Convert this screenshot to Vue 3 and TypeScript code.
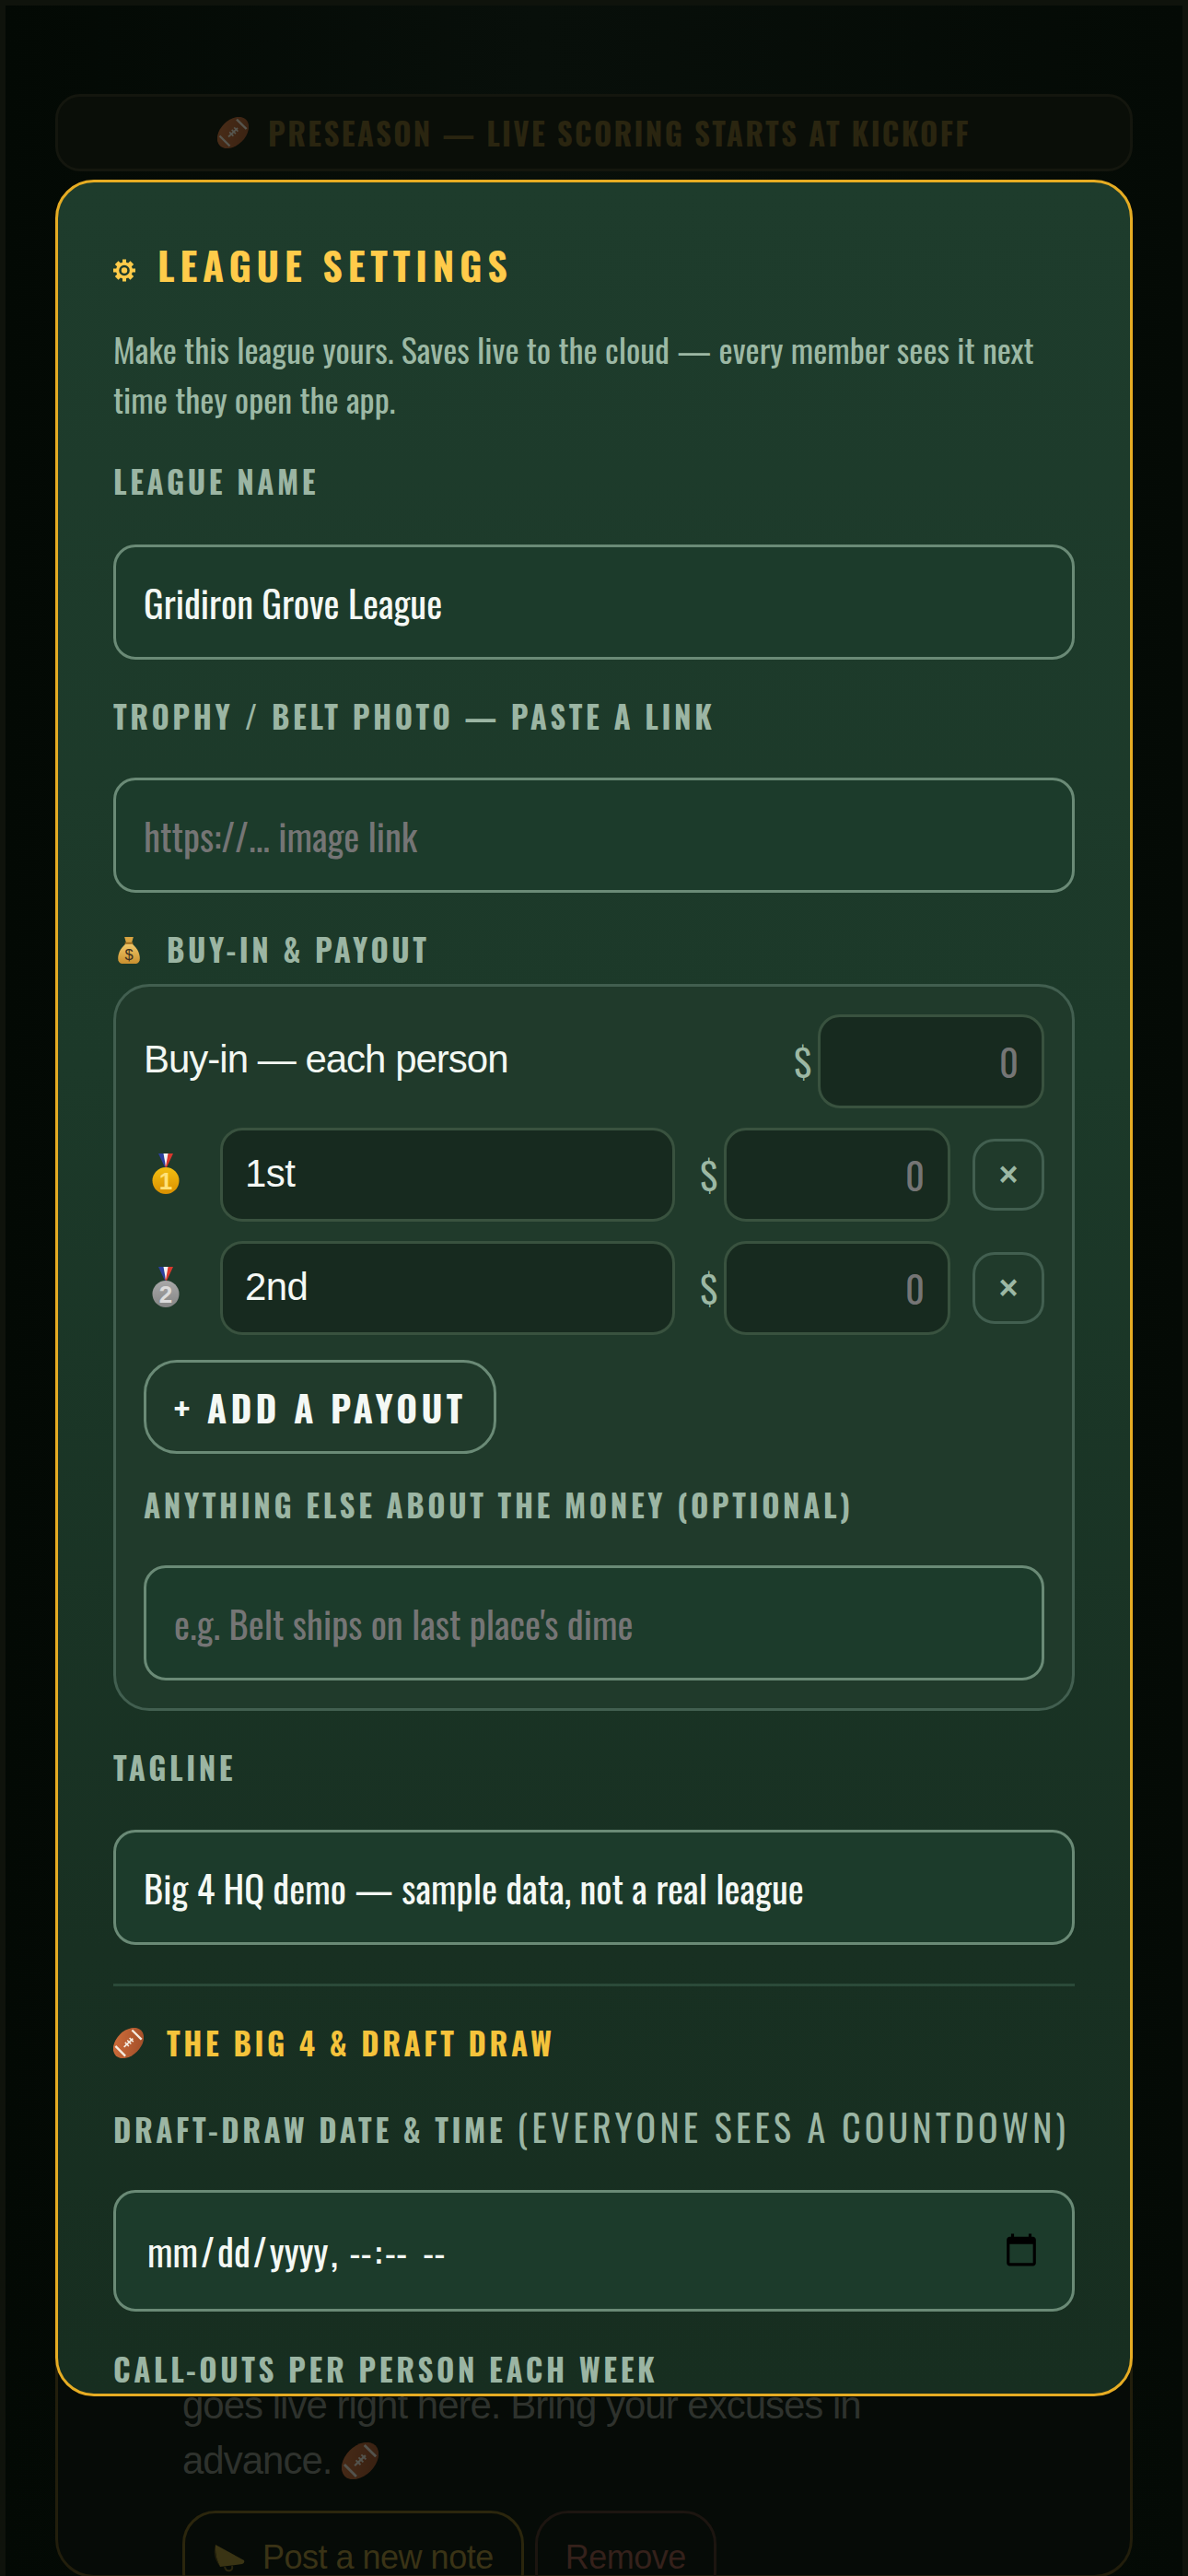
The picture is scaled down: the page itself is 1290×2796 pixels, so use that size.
<script setup lang="ts">
import { ref } from 'vue'

interface Payout {
  place: string
  tone: 'gold' | 'silver'
  digit: string
}

const leagueName = ref('Gridiron Grove League')
const tagline = ref('Big 4 HQ demo — sample data, not a real league')
const payouts = ref<Payout[]>([
  { place: '1st', tone: 'gold', digit: '1' },
  { place: '2nd', tone: 'silver', digit: '2' },
])
</script>

<template>
  <div class="page">
    <svg class="defs" width="0" height="0" aria-hidden="true">
      <defs>
        <linearGradient id="ballFill" x1="0" y1="0" x2="1" y2="1">
          <stop offset="0" stop-color="#d4713d" />
          <stop offset="1" stop-color="#9c4a26" />
        </linearGradient>
        <linearGradient id="goldFill" x1="0" y1="0" x2="0" y2="1">
          <stop offset="0" stop-color="#f3bf12" />
          <stop offset="1" stop-color="#d98f00" />
        </linearGradient>
        <linearGradient id="silverFill" x1="0" y1="0" x2="0" y2="1">
          <stop offset="0" stop-color="#a8a8a8" />
          <stop offset="1" stop-color="#858585" />
        </linearGradient>
        <linearGradient id="bagFill" x1="0" y1="0" x2="0" y2="1">
          <stop offset="0" stop-color="#f0c869" />
          <stop offset="1" stop-color="#c98f2e" />
        </linearGradient>
        <symbol id="football" viewBox="0 0 34 34">
          <ellipse cx="17" cy="17" rx="20" ry="13.6" transform="rotate(-45 17 17)" fill="url(#ballFill)" />
          <path d="M2.5 20.5 L13.5 31.5 M21 2.6 L31.6 13" stroke="#f5ece0" stroke-width="2.4" fill="none" />
          <path d="M12 21.5 L22 12" stroke="#f5ece0" stroke-width="1.8" fill="none" />
          <path d="M13.2 16.4 L17.4 20.6 M15.7 13.9 L19.9 18.1 M18.2 11.4 L22.4 15.6" stroke="#f5ece0" stroke-width="1.6" fill="none" />
        </symbol>
      </defs>
    </svg>

    <div class="status-pill">
      <svg class="pill-ball" viewBox="0 0 34 34"><use href="#football" /></svg>
      <span>PRESEASON — LIVE SCORING STARTS AT KICKOFF</span>
    </div>

    <section class="note-card">
      <p class="note-text">goes live right here. Bring your excuses in<br />advance. <svg class="note-ball" viewBox="0 0 34 34"><use href="#football" /></svg></p>
      <div class="note-actions">
        <button class="note-btn post" type="button">
          <svg class="horn" viewBox="0 0 36 34">
            <path d="M3 3 L34 20 Q35 23 32 24 L8 27 Q2 16 3 3Z" fill="#3a3414" />
            <path d="M3 3 Q-1 15 8 27 Q2 16 3 3Z" fill="#221f0c" />
            <path d="M13 27 Q14 32 19 31 Q22 30 21 26" stroke="#2a260f" stroke-width="2" fill="none" />
          </svg>
          <span>Post a new note</span>
        </button>
        <button class="note-btn remove" type="button">Remove</button>
      </div>
    </section>

    <div class="overlay">
      <div class="modal">
        <h2 class="modal-title">
          <svg class="gear" viewBox="0 0 24 24">
            <path fill-rule="evenodd" fill="#ffcb4a" d="M10 0h4v3.2l2.2.9 2.3-2.3 3.7 3.7-2.3 2.3.9 2.2H24v4h-3.2l-.9 2.2 2.3 2.3-3.7 3.7-2.3-2.3-2.2.9V24h-4v-3.2l-2.2-.9-2.3 2.3-3.7-3.7 2.3-2.3-.9-2.2H0v-4h3.2l.9-2.2-2.3-2.3 3.7-3.7 2.3 2.3 2.2-.9V0Zm2 6.2a5.8 5.8 0 1 0 0 11.6 5.8 5.8 0 0 0 0-11.6Z" />
            <circle cx="12" cy="12" r="3.2" fill="#ffcb4a" />
          </svg>
          <span>LEAGUE SETTINGS</span>
        </h2>
        <p class="intro">Make this league yours. Saves live to the cloud — every member sees it next time they open the app.</p>

        <label class="field-label first">LEAGUE NAME</label>
        <input v-model="leagueName" class="text-input" type="text" />

        <label class="field-label">TROPHY / BELT PHOTO — PASTE A LINK</label>
        <input class="text-input" type="text" placeholder="https://... image link" />

        <div class="field-label money-label">
          <svg class="bag" viewBox="0 0 26 32">
            <path d="M8 1 L18 1 L16 8 L10 8Z" fill="#d9a441" />
            <rect x="8.5" y="7" width="9" height="2.4" fill="#9a6a1e" />
            <path d="M9 9 C3 14 0 21 1 27 Q2 31 7 31 L19 31 Q24 31 25 27 C26 21 23 14 17 9Z" fill="url(#bagFill)" />
            <text x="13" y="27" text-anchor="middle" class="bag-sign">$</text>
          </svg>
          <span>BUY-IN &amp; PAYOUT</span>
        </div>

        <div class="money-box">
          <div class="buyin-row">
            <span class="buyin-text">Buy-in — each person</span>
            <span class="dollar">$</span>
            <input class="amount-input" type="text" inputmode="numeric" placeholder="0" />
          </div>

          <div v-for="p in payouts" :key="p.place" class="payout-row">
            <svg class="medal" viewBox="0 0 30 44">
              <path d="M7 0 L13 0 L16 14 L14 15Z" fill="#2b3f9e" />
              <path d="M23 0 L17 0 L14 14 L16 15Z" fill="#d8382e" />
              <path d="M12.5 0 L17.5 0 L15 14Z" fill="#f4f4f4" />
              <circle cx="15" cy="29.5" r="14.5" :fill="p.tone === 'gold' ? 'url(#goldFill)' : 'url(#silverFill)'" />
              <text x="15" y="39" text-anchor="middle" class="medal-digit" :fill="p.tone === 'gold' ? '#ffe27a' : '#dcdcdc'">{{ p.digit }}</text>
            </svg>
            <input class="place-input" type="text" :value="p.place" />
            <span class="dollar">$</span>
            <input class="amount-input" type="text" inputmode="numeric" placeholder="0" />
            <button class="remove-btn" type="button">×</button>
          </div>

          <button class="add-btn" type="button">+ ADD A PAYOUT</button>

          <label class="field-label inner">ANYTHING ELSE ABOUT THE MONEY (OPTIONAL)</label>
          <input class="text-input" type="text" placeholder="e.g. Belt ships on last place's dime" />
        </div>

        <label class="field-label tagline">TAGLINE</label>
        <input v-model="tagline" class="text-input" type="text" />

        <div class="divider"></div>

        <div class="big-heading">
          <svg class="big-ball" viewBox="0 0 34 34"><use href="#football" /></svg>
          <span>THE BIG 4 &amp; DRAFT DRAW</span>
        </div>

        <label class="field-label draft">DRAFT-DRAW DATE &amp; TIME <span class="label-note">(EVERYONE SEES A COUNTDOWN)</span></label>
        <input class="text-input date-input" type="datetime-local" />

        <label class="field-label last">CALL-OUTS PER PERSON EACH WEEK</label>
      </div>
    </div>
  </div>
</template>

<style>
html,
body {
  margin: 0;
  background: #040a05;
}
</style>

<style scoped>
.page {
  position: relative;
  box-sizing: border-box;
  width: 1290px;
  height: 2796px;
  overflow: hidden;
  padding: 102px 60px 0;
  border: solid #0f130c;
  border-width: 6px 6px 0;
  margin: 0;
  background: linear-gradient(90deg, #030904 0%, #080f0a 45%, #040a05 100%);
  font-family: "Liberation Sans", Arial, sans-serif;
}
.defs {
  position: absolute;
}
.status-pill {
  box-sizing: border-box;
  height: 84px;
  margin: -6px -6px 0;
  border: 3px solid #14160e;
  border-radius: 27px;
  background: #0a0e08;
  display: flex;
  align-items: center;
  justify-content: center;
  gap: 21px;
  color: #2a2510;
  font-family: "Oswald", sans-serif;
  font-weight: 700;
  font-size: 33px;
  letter-spacing: 2.3px;
}
.pill-ball {
  width: 34px;
  height: 34px;
  opacity: 0.32;
}
.note-card {
  box-sizing: border-box;
  height: 2600px;
  margin: 12px -6px 0;
  padding: 2380px 135px 0;
  border: 3px solid #221e0c;
  border-radius: 42px;
  background: #060b07;
}
.note-text {
  margin: 0;
  font-size: 42px;
  line-height: 60px;
  letter-spacing: -1px;
  color: #2e322d;
}
.note-ball {
  width: 40px;
  height: 40px;
  vertical-align: -6px;
  opacity: 0.32;
}
.note-actions {
  display: flex;
  gap: 12px;
  margin-top: 24px;
}
.note-btn {
  box-sizing: border-box;
  height: 102px;
  border-radius: 36px;
  background: transparent;
  font-family: inherit;
  font-size: 36px;
  letter-spacing: -0.5px;
  display: flex;
  align-items: center;
  gap: 18px;
  padding: 0 30px;
}
.post {
  border: 3px solid #2b260d;
  color: #3a3316;
}
.remove {
  border: 3px solid #1c1510;
  color: #35211b;
}
.horn {
  width: 36px;
  height: 34px;
}
.overlay {
  position: absolute;
  inset: -6px -6px 0;
  display: flex;
  justify-content: center;
  align-items: flex-start;
  padding-top: 195px;
  pointer-events: none;
}
.modal {
  box-sizing: border-box;
  width: 1170px;
  height: 2406px;
  overflow: hidden;
  padding: 60px;
  border: 3px solid #e6ac23;
  border-radius: 42px;
  background: linear-gradient(180deg, #1e3c2c 0%, #1c3929 40%, #183022 80%, #172e20 100%);
  color: #f2f7f2;
  pointer-events: auto;
}
.modal-title {
  display: flex;
  align-items: center;
  gap: 24px;
  margin: -2px 0 2px;
  height: 62px;
  font-family: "Oswald", sans-serif;
  font-weight: 700;
  font-size: 42px;
  letter-spacing: 5.8px;
  color: #ffcb4a;
}
.gear {
  width: 24px;
  height: 25px;
  margin-top: 13px;
  flex: none;
}
.intro {
  margin: 34px 0 0;
  font-family: "Oswald", sans-serif;
  font-weight: 400;
  font-size: 36px;
  line-height: 54px;
  color: #9cb8a4;
}
.field-label {
  display: block;
  margin: 44px 0 48px;
  font-family: "Oswald", sans-serif;
  font-weight: 700;
  font-size: 33px;
  line-height: 36px;
  letter-spacing: 3.6px;
  color: #9bb5a3;
}
.field-label.first {
  margin-top: 45px;
  margin-bottom: 50px;
}
.text-input {
  box-sizing: border-box;
  display: block;
  width: 100%;
  height: 125px;
  padding: 0 30px;
  border: 3px solid #6a8a76;
  border-radius: 24px;
  background: #1c3b2b;
  color: #f4f8f4;
  font-family: "Oswald", sans-serif;
  font-weight: 400;
  font-size: 40.5px;
  outline: none;
}
.text-input::placeholder,
.amount-input::placeholder {
  color: #757575;
}
.money-label {
  display: flex;
  align-items: center;
  gap: 28px;
  margin-bottom: 19px;
}
.bag {
  width: 26px;
  height: 31px;
  margin-left: 4px;
  flex: none;
}
.bag-sign {
  font-family: "Liberation Sans", sans-serif;
  font-size: 17px;
  font-weight: 400;
  fill: #3b2f22;
  letter-spacing: 0;
}
.money-box {
  box-sizing: border-box;
  padding: 30px;
  border: 3px solid #425f50;
  border-radius: 39px;
  background: #203a2b;
  display: flex;
  flex-direction: column;
}
.buyin-row {
  display: flex;
  align-items: center;
  height: 102px;
}
.buyin-text {
  flex: 1;
  font-size: 42px;
  letter-spacing: -1px;
  margin-top: -4px;
}
.dollar {
  font-family: "Oswald", sans-serif;
  font-weight: 400;
  font-size: 40.5px;
  color: #9cb8a4;
  width: 26px;
}
.amount-input {
  box-sizing: border-box;
  width: 246px;
  height: 102px;
  flex: none;
  padding: 0 25px;
  border: 3px solid #39523f;
  border-radius: 24px;
  background: #172a1f;
  color: #f4f8f4;
  font-family: "Oswald", sans-serif;
  font-weight: 400;
  font-size: 40.5px;
  text-align: right;
  outline: none;
}
.payout-row {
  display: flex;
  align-items: center;
  height: 102px;
  margin-top: 21px;
}
.medal {
  width: 30px;
  height: 44px;
  flex: none;
  margin: -3px 44px 0 9px;
}
.medal-digit {
  font-family: "Liberation Sans", sans-serif;
  font-weight: 700;
  font-size: 26px;
}
.place-input {
  box-sizing: border-box;
  width: 494px;
  height: 102px;
  flex: none;
  padding: 0 24px 3px;
  margin-right: 27px;
  border: 3px solid #39523f;
  border-radius: 24px;
  background: #172a1f;
  color: #f4f8f4;
  font-family: "Liberation Sans", sans-serif;
  font-size: 42px;
  letter-spacing: -0.6px;
  outline: none;
}
.remove-btn {
  box-sizing: border-box;
  width: 78px;
  height: 78px;
  flex: none;
  margin-left: 24px;
  padding: 0;
  border: 3px solid #425f50;
  border-radius: 24px;
  background: transparent;
  color: #9cb8a4;
  font-family: "Liberation Sans", sans-serif;
  font-weight: 700;
  font-size: 36px;
}
.add-btn {
  box-sizing: border-box;
  align-self: flex-start;
  height: 102px;
  width: 383px;
  margin-top: 27px;
  padding: 0;
  border: 3px solid #6a8a76;
  border-radius: 36px;
  background: transparent;
  color: #f4f8f4;
  font-family: "Oswald", sans-serif;
  font-weight: 700;
  font-size: 39px;
  letter-spacing: 4.25px;
}
.field-label.inner {
  margin: 38px 0 47px;
}
.field-label.tagline {
  margin: 44px 0 49px;
}
.divider {
  height: 3px;
  margin-top: 42px;
  background: #2b4a39;
}
.big-heading {
  display: flex;
  align-items: center;
  gap: 25px;
  height: 36px;
  margin-top: 43px;
  font-family: "Oswald", sans-serif;
  font-weight: 700;
  font-size: 33px;
  letter-spacing: 3.6px;
  color: #f5c33b;
}
.big-ball {
  width: 33px;
  height: 33px;
  flex: none;
}
.field-label.draft {
  margin: 52px 0 44px;
  line-height: 42px;
  white-space: nowrap;
}
.label-note {
  font-weight: 400;
  font-size: 40px;
  letter-spacing: 4.25px;
}
.date-input {
  height: 132px;
  padding: 0 33px;
  color-scheme: light;
}
.date-input::-webkit-datetime-edit-text {
  padding: 0 2px;
}
.date-input::-webkit-datetime-edit-ampm-field {
  margin-left: 6px;
}
.field-label.last {
  margin-top: 45px;
}
</style>
